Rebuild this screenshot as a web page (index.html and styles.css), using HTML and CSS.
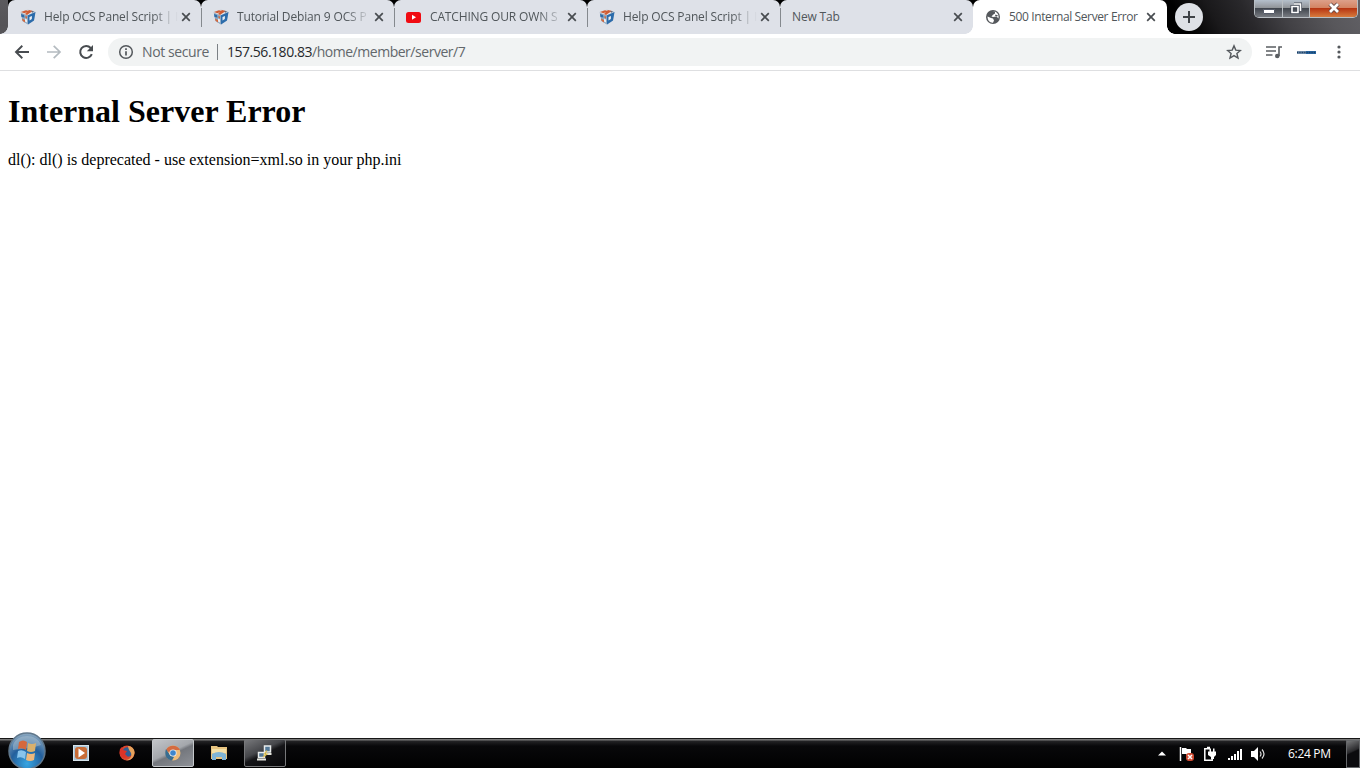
FILE: index.html
```
<!DOCTYPE html>
<html lang="en">
  <head>
    <meta charset="utf-8">
    <title>500 Internal Server Error</title>
    <link rel="stylesheet" href="styles.css">
  </head>
  <body>
    <svg width="0" height="0" class="defs">
      <defs>
        <symbol id="cube" viewBox="0 0 16 16">
          <path fill="#b9c3cf" d="M.5 3L8 .5 15.500 3 14 11.500 8 15.500 2.500 12z"/>
          <path fill="#e2e5ea" d="M.5 3L8 .5l7.500 2.500L7 6.500z"/>
          <path fill="#2c6cab" d="M7.500 6.500l8-3.500L14 11.500l-6 4z"/>
          <path fill="#8fa9c2" d="M1 4l6.500 2.500.5 9L2.500 12z"/>
          <path fill="#cf5d35" d="M1 3l5-1.800L9 2 4.500 4.300zM9 1l4 1-4 2.500L7 6 5 5z"/>
          <path fill="#2c6cab" d="M1 5l3 1 .5 2.500L1.500 8z"/>
          <path fill="#d2693f" d="M2 9.500l3 1.500v2.500l-2.500-1.700zM5.500 7L7 7.500v2L5.500 9z"/>
          <path fill="#e9eef3" d="M9.500 8l2.500-1-.2 3-2.300 1.500zM5 9.500l2 1v3l-2-1z"/>
          <path fill="#5a6778" d="M11.500 1.700l3 1-2.500 1z"/>
        </symbol>
        <symbol id="cross" viewBox="0 0 10 10">
          <path d="M1.2 1.2l7.6 7.6M8.8 1.2L1.2 8.8" stroke="#484c50" stroke-width="1.7"/>
        </symbol>
      </defs>
    </svg>

    <div class="tabstrip">
      <div class="tab first">
        <svg class="favicon"><use href="#cube"/></svg>
        <span class="tab-title fade">Help OCS Panel Script | I</span>
        <svg class="close"><use href="#cross"/></svg>
      </div>
      <div class="tab">
        <svg class="favicon"><use href="#cube"/></svg>
        <span class="tab-title fade">Tutorial Debian 9 OCS P</span>
        <svg class="close"><use href="#cross"/></svg>
      </div>
      <div class="tab">
        <svg class="favicon" viewBox="0 0 16 16"><rect x="0" y="3" width="15" height="11" rx="2.500" fill="#f00b12"/><path d="M6 5.800v5l4-2.500z" fill="#fff"/></svg>
        <span class="tab-title fade">CATCHING OUR OWN S</span>
        <svg class="close"><use href="#cross"/></svg>
      </div>
      <div class="tab">
        <svg class="favicon"><use href="#cube"/></svg>
        <span class="tab-title fade">Help OCS Panel Script | I</span>
        <svg class="close"><use href="#cross"/></svg>
      </div>
      <div class="tab last">
        <span class="tab-title">New Tab</span>
        <svg class="close"><use href="#cross"/></svg>
      </div>
      <div class="tab active">
        <svg class="favicon" viewBox="0 0 16 16"><circle cx="8" cy="8" r="7" fill="#55585c"/><path d="M2.500 7.500l3.500 1.600 2 .3 1 2-1 2.300C5 14 2.500 11.500 2.500 7.500zM7 2.700l3-.2v2L8 5.700 6.500 7.500 8 8l3.500-.5 2 2c.5-3-.5-5.500-3-6.800z" fill="#fff"/><path d="M10.500 5.500l2.500 1-1 1-2-.5z" fill="#55585c"/></svg>
        <span class="tab-title">500 Internal Server Error</span>
        <svg class="close"><use href="#cross"/></svg>
      </div>
      <div class="new-tab">
        <svg width="14" height="14" viewBox="0 0 14 14"><path d="M7 1v12M1 7h12" stroke="#3f4347" stroke-width="2"/></svg>
      </div>
      <div class="window-buttons">
        <div class="win-btn min"><svg width="12" height="12" viewBox="0 0 12 12"><rect x=".5" y="6.500" width="11" height="4" rx=".5" fill="#fff" stroke="#555b68"/></svg></div>
        <div class="win-btn max"><svg width="12" height="12" viewBox="0 0 12 12"><path d="M4 2h6.500v7M2 4.500h6v6H2z" fill="none" stroke="#414854" stroke-width="3"/><path d="M4 2h6.500v7M2 4.500h6v6H2z" fill="none" stroke="#fff" stroke-width="1.600"/></svg></div>
        <div class="win-btn exit"><svg width="12" height="12" viewBox="0 0 12 12"><path d="M2 2l8 8M10 2l-8 8" stroke="#614543" stroke-width="4.500"/><path d="M2 2l8 8M10 2l-8 8" stroke="#fff" stroke-width="2.800"/></svg></div>
      </div>
    </div>

    <div class="toolbar">
      <svg class="nav" viewBox="0 0 16 16"><path d="M15 8H2.500M8.300 1.800L2 8l6.300 6.200" fill="none" stroke="#484c50" stroke-width="1.900"/></svg>
      <svg class="nav" viewBox="0 0 16 16"><path d="M1 8h12.500M7.700 1.800L14 8l-6.300 6.200" fill="none" stroke="#b4bbc0" stroke-width="1.700"/></svg>
      <svg class="nav" viewBox="0 0 16 16"><path d="M13.800 10.200A6 6 0 1 1 12.700 4" fill="none" stroke="#484c50" stroke-width="2"/><path d="M15 1v6.200H8.800z" fill="#484c50"/></svg>
      <div class="omnibox">
        <svg class="info" viewBox="0 0 16 16"><circle cx="8" cy="8" r="6.300" fill="none" stroke="#54585c" stroke-width="1.500"/><path d="M8 7.200v4.300M8 4.300v1.600" stroke="#484c50" stroke-width="1.600"/></svg>
        <span class="insecure">Not secure</span>
        <span class="divider"></span>
        <span class="url"><b>157.56.180.83</b>/home/member/server/7</span>
        <svg class="star" viewBox="0 0 16 16"><path d="M8 1.900l1.800 4.200 4.600.4-3.500 3 1.100 4.500L8 11.600 4 14l1.100-4.500-3.500-3 4.600-.4z" fill="none" stroke="#54585c" stroke-width="1.400"/></svg>
      </div>
      <svg class="queue" viewBox="0 0 18 14"><path d="M1 2h10M1 6h10M1 10h6.500M14 11V2h3" fill="none" stroke="#5a5e62" stroke-width="1.600"/><circle cx="12.300" cy="11" r="2.300" fill="#5a5e62"/></svg>
      <svg class="extension" viewBox="0 0 19 3"><path d="M0 0h19v3H0z" fill="#7893b0"/><path d="M9 0h10v3H9z" fill="#2a68a4"/><path d="M0 1.500h19" stroke="#173c62" stroke-width="1.500" stroke-dasharray="1 .7"/></svg>
      <svg class="menu" viewBox="0 0 4 14"><g fill="#54585c"><circle cx="2" cy="2" r="1.600"/><circle cx="2" cy="7" r="1.600"/><circle cx="2" cy="12" r="1.600"/></g></svg>
    </div>

    <div class="page">
      <h1>Internal Server Error</h1>
      <p>dl(): dl() is deprecated - use extension=xml.so in your php.ini</p>
    </div>

    <div class="taskbar">
      <svg class="start" viewBox="0 0 38 38">
        <defs>
          <radialGradient id="orb" cx=".5" cy=".85" r=".9"><stop offset="0" stop-color="#37a5e2"/><stop offset=".5" stop-color="#235f9c"/><stop offset="1" stop-color="#9cb4c6"/></radialGradient>
        </defs>
        <circle cx="19" cy="19" r="18" fill="url(#orb)" stroke="#60778b" stroke-width="1.500"/>
        <path d="M5 13C9 1 29 1 33 13 25 16 14 17 5 18z" fill="#b9c9d5" opacity=".45"/>
        <path d="M11 10q4-3 8 0l-1 8q-4-3-8-1z" fill="#d6683c"/>
        <path d="M20 11q4 2 8 0l-1 8q-4 2-8 0z" fill="#d9b06c"/>
        <path d="M10 19q4-2 8 1l-1 7q-4-3-8-1z" fill="#88c4ec"/>
        <path d="M19 21q4 2 8 0l-1 7q-4 2-8 0z" fill="#edb87c"/>
      </svg>
      <div class="task">
        <svg width="16" height="16" viewBox="0 0 16 16"><rect x=".5" y=".5" width="15" height="15" fill="#a9c5d8" stroke="#d6e3ea"/><rect x="2" y="2" width="12" height="12" rx="3" fill="#c86d38"/><path d="M5.500 3.500v9L12 8z" fill="#fff"/></svg>
      </div>
      <div class="task">
        <svg width="16" height="16" viewBox="0 0 16 16"><circle cx="8" cy="8" r="7.500" fill="#d9452d"/><circle cx="8.500" cy="7" r="4.800" fill="#315e93"/><path d="M9 1c5 0 8 5 6 9-1 4-5 6-8 5 5-1 6-4 5-7-1-2-3-4-3-7z" fill="#e5a25c"/><path d="M1 4l2-2 1 3 4 1-2 3 3 3-4 1C1 12 0 8 1 4z" fill="#dc3428"/></svg>
      </div>
      <div class="task open light">
        <svg width="16" height="16" viewBox="0 0 16 16"><circle cx="8" cy="8" r="7.500" fill="#eebc78"/><path d="M1 5a8 8 0 0 1 14 0H8L5 8z" fill="#d46b40"/><path d="M1 4l4 6 4 2-2 3.500C1 15-1 9 1 4z" fill="#386d91"/><circle cx="8" cy="8" r="3.600" fill="#e9edf0"/><circle cx="8" cy="8" r="2.800" fill="#3d86cd"/></svg>
      </div>
      <div class="task">
        <svg width="16" height="16" viewBox="0 0 16 16"><path d="M0 1h6l1 1h9v12H0z" fill="#e8c480"/><path d="M1 4h14v4H1z" fill="#f5e0a6"/><path d="M1 15V9q7-4 14 0v6h-4v-3H5v3z" fill="#7fb4d5"/></svg>
      </div>
      <div class="task open">
        <svg width="16" height="16" viewBox="0 0 16 16"><path d="M7.500 1h6v6h-6zM1.500 7.500h6v5h-6z" fill="#547998" stroke="#e8ebeb" stroke-width="1.500"/><path d="M0 14.500h9M9 9h5.500" stroke="#e5e6df" stroke-width="1.800"/><path d="M10 5.500L7.500 9H10l-4 3" fill="none" stroke="#dfc04e" stroke-width="1.200"/></svg>
      </div>
      <div class="tray">
        <svg width="8" height="5" viewBox="0 0 8 5"><path d="M0 4.500h8L4 .5z" fill="#fff"/></svg>
        <svg class="flag" width="16" height="16" viewBox="0 0 16 16"><path d="M1.500 1v14" stroke="#fff" stroke-width="1.500"/><path d="M3 2h4l1 1h4v6H8L7 8H3z" fill="#fff"/><rect x="7" y="7" width="8" height="8" rx="3" fill="#d14b32"/><path d="M9 9l4 4M13 9l-4 4" stroke="#fff" stroke-width="1.500"/></svg>
        <svg class="power" width="14" height="16" viewBox="0 0 14 16"><path d="M7 2.800H1.800v11.400h7.400V12M4 1.500h3" fill="none" stroke="#fff" stroke-width="1.500"/><path d="M5 5.500h8V9l-2 2v2H8v-2L5 9zM6.500 2.500H8v3H6.500zM10 2.500h1.500v3H10z" fill="#fff"/></svg>
        <svg class="signal" width="14" height="12" viewBox="0 0 14 12"><path d="M1 10v2M4 8v4M7 6v6M10 3v9M13 1v11" stroke="#fff" stroke-width="2"/></svg>
        <svg class="volume" width="15" height="14" viewBox="0 0 15 14"><path d="M0 4h3l4-4v14l-4-4H0z" fill="#fff"/><path d="M9 4.500q2 2.500 0 5M11 2.500q4 4.500 0 9" fill="none" stroke="#ddd" stroke-width="1.200"/></svg>
        <span class="clock">6:24 PM</span>
        <div class="show-desktop"></div>
      </div>
    </div>
  </body>
</html>
```

FILE: styles.css
```
body {
  margin: 0;
  height: 768px;
  display: flex;
  flex-direction: column;
  overflow: hidden;
  background: #fff;
  font-family: "Open Sans", sans-serif;
}

svg {
  display: block;
  flex: none;
}

.defs {
  position: absolute;
}

/* tabs */
.tabstrip {
  height: 34px;
  flex: none;
  display: flex;
  padding-left: 8px;
  background:
    linear-gradient(#5b5a5e, #525155) 0 0 / 8px 34px no-repeat,
    linear-gradient(60deg, transparent 1030px, #1a191b 1060px, #29282b 1090px, #414044 1120px, #58575b 1160px, #626166),
    #000;
}

.tab {
  position: relative;
  box-sizing: border-box;
  width: 193px;
  height: 34px;
  flex: none;
  display: flex;
  align-items: center;
  padding: 0 10px 0 12px;
  border-radius: 7px 7px 0 0;
  background: #dee1e8;
  color: #50565a;
  font-size: 12px;
}

.tab:not(.active):not(.last)::after {
  content: "";
  position: absolute;
  right: -1px;
  top: 8px;
  z-index: 1;
  width: 1px;
  height: 19px;
  background: #85898e;
}

.tab.first::before {
  content: "";
  position: absolute;
  left: -8px;
  bottom: 0;
  width: 8px;
  height: 8px;
  background: radial-gradient(circle at 0 0, #555458 7.5px, #dee1e8 8px);
}

.tab.last {
  border-bottom-right-radius: 8px;
}

.tab.active {
  width: 194px;
  background: #fff;
}

.tab.active::before,
.tab.active::after {
  content: "";
  position: absolute;
  bottom: 0;
  width: 8px;
  height: 8px;
}

.tab.active::before {
  left: -8px;
  background: radial-gradient(circle at 0 0, #dee1e8 7.5px, #fff 8px);
}

.tab.active::after {
  right: -8px;
  background: radial-gradient(circle at 8px 0, #000 7.5px, #fff 8px);
}

.favicon {
  width: 16px;
  height: 16px;
  margin-right: 8px;
}

.tab-title {
  flex: 1;
  padding-bottom: 2px;
  white-space: nowrap;
  letter-spacing: -0.15px;
}

.active .tab-title {
  letter-spacing: -0.38px;
}

.fade {
  -webkit-mask-image: linear-gradient(to right, #000 108px, transparent 134px);
  mask-image: linear-gradient(to right, #000 108px, transparent 134px);
}

.close {
  width: 10px;
  height: 10px;
}

.active .close {
  margin-right: 1px;
}

.new-tab {
  width: 28px;
  height: 28px;
  margin: 3px 0 0 8px;
  display: flex;
  flex: none;
  align-items: center;
  justify-content: center;
  border-radius: 50%;
  background: #dee1e6;
}

.window-buttons {
  box-sizing: border-box;
  width: 104px;
  height: 18px;
  margin: 0 2px 0 auto;
  display: flex;
  border: 1px solid #b9bfc4;
  border-top: 0;
  border-radius: 0 0 5px 5px;
  overflow: hidden;
}

.win-btn {
  width: 27px;
  display: flex;
  align-items: center;
  justify-content: center;
  border-right: 1px solid #b9bfc4;
  background: linear-gradient(#b5c0cc, #8f9296 48%, #41464e 50%, #777b81);
}

.win-btn.max {
  width: 26px;
}

.win-btn svg {
  margin-top: -2px;
}

.win-btn.min svg {
  margin-top: 1px;
}

.win-btn.exit {
  flex: 1;
  border: 0;
  background: linear-gradient(#dda08a, #d38261 48%, #b73613 50%, #d77b3d);
}

/* address bar */
.toolbar {
  box-sizing: border-box;
  height: 37px;
  flex: none;
  display: flex;
  align-items: center;
  padding: 0 19px 0 14px;
  border-bottom: 1px solid #dedfe1;
}

.nav {
  width: 16px;
  height: 16px;
  margin-right: 16px;
}

.omnibox {
  box-sizing: border-box;
  width: 1144px;
  height: 28px;
  margin-left: -2px;
  display: flex;
  align-items: center;
  padding: 0 10px;
  border-radius: 14px;
  background: #f1f3f3;
  color: #62676b;
  font-size: 14px;
  white-space: nowrap;
}

.info {
  width: 16px;
  height: 16px;
  margin-right: 8px;
}

.insecure {
  width: 67px;
  padding-bottom: 2px;
  letter-spacing: -0.4px;
}

.divider {
  width: 1px;
  height: 16px;
  margin: 0 9px 0 8px;
  background: #7c8185;
}

.url {
  flex: 1;
  padding-bottom: 2px;
  letter-spacing: -0.47px;
}

.url b {
  color: #25282b;
  font-weight: normal;
}

.star {
  width: 16px;
  height: 16px;
}

.queue {
  width: 18px;
  height: 14px;
  margin-left: 13px;
}

.extension {
  width: 19px;
  height: 3px;
  margin-left: 14px;
}

.menu {
  width: 4px;
  height: 14px;
  margin-left: auto;
}

/* document */
.page {
  flex: 1;
  padding: 0 8px;
  color: #000;
  font-family: "Liberation Serif", serif;
}

.page h1 {
  margin: 22px 0 21px;
  font-size: 32px;
  line-height: 37px;
}

.page p {
  margin: 0;
  font-size: 16px;
  line-height: 18px;
}

/* taskbar */
.taskbar {
  position: relative;
  box-sizing: border-box;
  height: 30px;
  flex: none;
  display: flex;
  align-items: center;
  padding: 0 0 0 60px;
  border-top: 1px solid #161616;
  background: linear-gradient(#777 0, #777 1px, #242426 2px, #08080a 7px, #000);
}

.start {
  position: absolute;
  left: 8px;
  top: -7px;
  width: 38px;
  height: 38px;
}

.task {
  box-sizing: border-box;
  width: 42px;
  height: 28px;
  margin: -1px 4px 0 0;
  display: flex;
  align-items: center;
  justify-content: center;
}

.task.open {
  border: 1px solid #77787a;
  border-radius: 2px;
  background: linear-gradient(155deg, #77787b, #45464a 40%, #151518 52%, #08080a);
}

.task.light {
  border-color: #c5c8cb;
  background: linear-gradient(155deg, #c3c5c9, #a4a7ac 45%, #74777d 53%, #8e9197);
}

.tray {
  height: 28px;
  margin-left: auto;
  display: flex;
  align-items: center;
  color: #fff;
}

.flag {
  margin-left: 13px;
}

.power {
  margin-left: 8px;
}

.signal {
  margin-left: 11px;
}

.volume {
  margin-left: 9px;
}

.clock {
  width: 43px;
  margin: 0 15px 0 22px;
  font-size: 12px;
  white-space: nowrap;
  letter-spacing: -0.3px;
}

.show-desktop {
  box-sizing: border-box;
  width: 14px;
  height: 28px;
  border: 1px solid #65676a;
  background: linear-gradient(155deg, #77787a, #29292c 40%, #0b0b0e 45%);
}
```
